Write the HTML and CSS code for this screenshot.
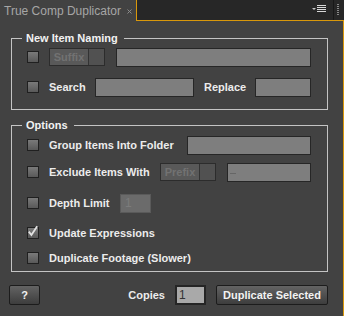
FILE: index.html
```html
<!DOCTYPE html>
<html>
<head>
<meta charset="utf-8">
<title>True Comp Duplicator</title>
<link rel="stylesheet" href="styles.css">
</head>
<body>
<div class="titlebar">
  <div class="tab">
    <span class="tab-title">True Comp Duplicator</span>
    <span class="tab-close"><svg width="5" height="5" viewBox="0 0 5 5"><path d="M0.5 0.5 L4.5 4.5 M4.5 0.5 L0.5 4.5" stroke="#8c8c8c" stroke-width="1"/></svg></span>
  </div>
  <div class="bar">
    <span class="menu-icon"><svg width="14" height="8" viewBox="0 0 14 8"><path d="M0 3 H4 L2 5 Z" fill="#c8c8c8"/><rect x="5" y="0" width="9" height="1" fill="#d8d8d8"/><rect x="5" y="2" width="9" height="1" fill="#d8d8d8"/><rect x="5" y="4" width="9" height="1" fill="#d8d8d8"/><rect x="5" y="6" width="9" height="1" fill="#d8d8d8"/></svg></span>
    <span class="divider"></span>
    <span class="gripper"></span>
  </div>
</div>
<div class="panel">
  <fieldset class="group group-naming">
    <legend>New Item Naming</legend>
    <div class="row">
      <span class="check"></span>
      <span class="dropdown"><span class="dd-label">Suffix</span><span class="dd-arrow"></span></span>
      <span class="field field-grow"></span>
    </div>
    <div class="row">
      <span class="check"></span>
      <span class="label label-search">Search</span>
      <span class="field field-search"></span>
      <span class="label label-replace">Replace</span>
      <span class="field field-fill"></span>
    </div>
  </fieldset>

  <fieldset class="group group-options">
    <legend>Options</legend>
    <div class="row">
      <span class="check"></span>
      <span class="label">Group Items Into Folder</span>
      <span class="field field-folder"></span>
    </div>
    <div class="row row-exclude">
      <span class="check"></span>
      <span class="label">Exclude Items With</span>
      <span class="dropdown dropdown-right"><span class="dd-label">Prefix</span><span class="dd-arrow"></span></span>
      <span class="field field-exclude"><span class="caret"></span></span>
    </div>
    <div class="row row-depth">
      <span class="check"></span>
      <span class="label label-depth">Depth Limit</span>
      <span class="field field-depth">1</span>
    </div>
    <div class="row row-update">
      <span class="check"><svg class="tick" width="12" height="12" viewBox="0 0 12 12"><path d="M1.8 5.6 L4.4 9 L10.2 0.2" fill="none" stroke="#e2e2e2" stroke-width="1.8"/></svg></span>
      <span class="label">Update Expressions</span>
    </div>
    <div class="row row-footage">
      <span class="check"></span>
      <span class="label">Duplicate Footage (Slower)</span>
    </div>
  </fieldset>

  <div class="footer">
    <button class="btn btn-help">?</button>
    <span class="label copies-label">Copies</span>
    <span class="copies-input">1</span>
    <button class="btn btn-dup">Duplicate Selected</button>
  </div>
</div>
</body>
</html>
```

FILE: styles.css
```css
body {
  margin: 0;
  width: 344px;
  height: 316px;
  overflow: hidden;
  background: #424242;
  font-family: "Liberation Sans", Arial, sans-serif;
  font-size: 11px;
  color: #ececec;
}

.titlebar {
  display: flex;
  height: 21px;
}

.tab {
  width: 136px;
  box-sizing: border-box;
  display: flex;
  align-items: center;
  padding-left: 4px;
  background: #424242;
  color: #a6a6a6;
  font-size: 12px;
}

.tab-close {
  display: flex;
  margin-left: 6px;
  margin-top: 1px;
}

.bar {
  flex: 1;
  display: flex;
  align-items: center;
  background: #272727;
  border-left: 1px solid #d9980b;
  border-bottom: 1px solid #d9980b;
}

.menu-icon {
  display: flex;
  margin-left: auto;
  margin-top: -2px;
}

.divider {
  align-self: stretch;
  width: 1px;
  margin-left: 7px;
  background: #181818;
}

.gripper {
  width: 2px;
  height: 12px;
  margin: 0 5px 0 3px;
  background: repeating-linear-gradient(#8a8a8a 0 1px, transparent 1px 2px);
}

.panel {
  height: 295px;
  box-sizing: border-box;
  border-right: 1px solid #d9980b;
  padding-top: 11px;
}

.group {
  margin: 0 0 0 11px;
  width: 317px;
  min-width: 0;
  box-sizing: border-box;
  border: 1px solid #c4c4c4;
  padding: 2px 16px 12px 15px;
}

.group legend {
  margin-left: -5px;
  padding: 0 6px 0 4px;
  font-weight: bold;
  line-height: 13px;
  color: #f2f2f2;
}

.group-options {
  margin-top: 9px;
  padding-top: 3px;
  padding-bottom: 3px;
}

.row {
  display: flex;
  align-items: center;
  height: 20px;
}

.group-naming .row + .row { margin-top: 10px; }
.row-exclude { margin-top: 7px; }
.row-depth { margin-top: 11px; }
.row-update { margin-top: 10px; }
.row-footage { margin-top: 5px; }

.check {
  flex: none;
  width: 12px;
  height: 12px;
  box-sizing: border-box;
  border: 1px solid #202020;
  background: linear-gradient(#7a7a7a, #595959);
}

.tick {
  display: block;
  margin: -2px 0 0 -1px;
  overflow: visible;
}

.label {
  margin-left: 10px;
  font-weight: bold;
  white-space: nowrap;
  color: #ececec;
}

.label-search { width: 46px; }
.label-replace { width: 51px; }
.label-depth { width: 71px; }

.dropdown {
  flex: none;
  display: flex;
  width: 56px;
  height: 18px;
  box-sizing: border-box;
  margin-left: 10px;
  border: 1px solid #2c2c2c;
  background: #595959;
}

.dropdown-right { margin-left: auto; }

.dd-label {
  width: 38px;
  border-right: 1px solid #333;
  color: #727272;
  font-weight: bold;
  text-align: center;
  line-height: 16px;
}

.dd-arrow {
  flex: 1;
  background: #515151;
}

.field {
  flex: none;
  height: 19px;
  box-sizing: border-box;
  border: 1px solid #262626;
  background: #7e7e7e;
}

.field-grow { flex: 1; margin-left: 11px; }
.field-search { width: 99px; }
.field-fill { flex: 1; }
.field-folder { width: 124px; margin-left: auto; }

.field-exclude {
  width: 84px;
  margin-left: 11px;
  display: flex;
  align-items: center;
}

.caret {
  width: 6px;
  height: 1px;
  margin: 3px 0 0 2px;
  background: #666;
}

.field-depth {
  width: 31px;
  height: 19px;
  border-color: #5a5a5a;
  background: #6b6b6b;
  color: #7c7c7c;
  font-size: 12px;
  line-height: 17px;
  padding-left: 4px;
}

.footer {
  display: flex;
  align-items: center;
  height: 20px;
  margin-top: 13px;
  padding: 0 15px 0 9px;
}

.btn {
  height: 20px;
  box-sizing: border-box;
  padding: 0;
  border: 1px solid #1c1c1c;
  border-radius: 2px;
  background: linear-gradient(#636363, #3d3d3d);
  color: #f2f2f2;
  font-family: inherit;
  font-size: 11px;
  font-weight: bold;
}

.btn-help { width: 31px; }
.btn-dup { width: 112px; margin-left: 10px; }

.copies-label { margin-left: auto; }

.copies-input {
  width: 31px;
  height: 20px;
  box-sizing: border-box;
  margin-left: 10px;
  border: 2px solid #252525;
  background: #a9a9a9;
  color: #333;
  font-size: 12px;
  line-height: 16px;
  padding-left: 2px;
}
```
